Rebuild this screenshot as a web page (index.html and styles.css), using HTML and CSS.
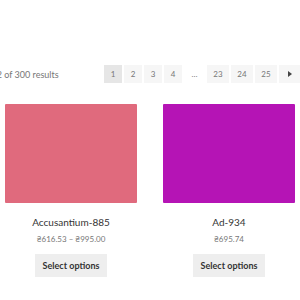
FILE: index.html
```html
<!DOCTYPE html>
<html lang="en">
<head>
  <meta charset="UTF-8">
  <meta name="viewport" content="width=device-width, initial-scale=1.0">
  <title>Shop</title>
  <link rel="stylesheet" href="styles.css">
</head>
<body>

<div class="toolbar">
  <p class="result-count">Showing 1–12 of 300 results</p>
  <nav class="pagination">
    <span class="page current">1</span>
    <a class="page" href="#">2</a>
    <a class="page" href="#">3</a>
    <a class="page" href="#">4</a>
    <span class="dots">…</span>
    <a class="page wide" href="#">23</a>
    <a class="page wide" href="#">24</a>
    <a class="page wide" href="#">25</a>
    <a class="page next" href="#"><span class="arrow"></span></a>
  </nav>
</div>

<ul class="products">
  <li class="product">
    <div class="thumb pink"></div>
    <h2 class="title">Accusantium-885</h2>
    <span class="price">₴616.53 – ₴995.00</span>
    <a class="button" href="#">Select options</a>
  </li>
  <li class="product">
    <div class="thumb purple"></div>
    <h2 class="title">Ad-934</h2>
    <span class="price">₴695.74</span>
    <a class="button" href="#">Select options</a>
  </li>
</ul>

</body>
</html>
```

FILE: styles.css
```css
:root {
  --text-color: #333;
  --muted-color: #777;
  --page-bg: #f6f6f6;
  --page-current-bg: #e6e6e6;
  --button-bg: #eeeeee;
}
body {
  margin: 0;
  font-family: 'Lato', 'Liberation Sans', sans-serif;
  background: #fff;
  color: var(--text-color);
  overflow: hidden;
}
.toolbar {
  display: flex;
  align-items: center;
  padding-top: 65px;
}
.result-count {
  margin: 0 0 0 -55px;
  font-size: 9px;
  color: var(--muted-color);
}
.pagination {
  display: flex;
  gap: 2px;
  margin-left: auto;
}
.page {
  width: 18px;
  height: 18px;
  display: flex;
  align-items: center;
  justify-content: center;
  background: var(--page-bg);
  color: var(--muted-color);
  font-size: 8px;
  text-decoration: none;
}
.page.current {
  background: var(--page-current-bg);
}
.page.wide {
  width: 22px;
}
.page.next {
  width: 21px;
}
.dots {
  width: 21px;
  display: flex;
  align-items: center;
  justify-content: center;
  color: var(--muted-color);
  font-size: 8px;
}
.arrow {
  width: 0;
  height: 0;
  border-top: 3px solid transparent;
  border-bottom: 3px solid transparent;
  border-left: 4px solid #444;
}
.products {
  list-style: none;
  margin: 21px 0 0;
  padding: 0 0 0 5px;
  display: grid;
  grid-template-columns: 132px 132px;
  gap: 26px;
}
.product {
  display: flex;
  flex-direction: column;
  align-items: center;
  text-align: center;
}
.thumb {
  width: 132px;
  height: 99px;
  border-radius: 1px;
}
.thumb.pink {
  background: #e06a7d;
}
.thumb.purple {
  background: #b514b5;
}
.title {
  margin: 13px 0 0;
  font-size: 10px;
  font-weight: normal;
  color: var(--text-color);
}
.price {
  margin-top: 6px;
  font-size: 8px;
  color: var(--muted-color);
}
.button {
  margin-top: 10px;
  width: 72px;
  height: 23px;
  display: flex;
  align-items: center;
  justify-content: center;
  background: var(--button-bg);
  color: var(--text-color);
  font-size: 9px;
  font-weight: bold;
  text-decoration: none;
}
```
